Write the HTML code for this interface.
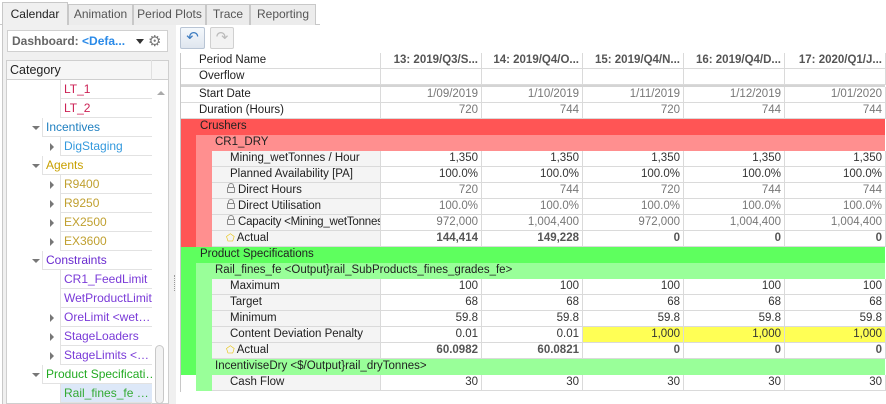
<!DOCTYPE html>
<html><head><meta charset="utf-8"><style>
*{box-sizing:border-box;margin:0;padding:0}
body{width:886px;height:404px;overflow:hidden;background:#fff;font-family:"Liberation Sans",sans-serif;font-size:11.5px;color:#222;position:relative}
.a{position:absolute}
.tab{position:absolute;top:4px;height:21px;border:1px solid #c8c8c8;border-bottom:none;background:#ececec;color:#555;text-align:center;line-height:19px;font-size:12px}
.tr{position:absolute;left:6px;width:146px;height:19px;font-size:12px}
.tr .c{position:absolute;top:0;height:19px;right:0;border:1px solid #e2e2e2;border-right:none;border-top:none;line-height:18px;padding-left:3px;white-space:nowrap;overflow:hidden;background:#fff}
.ar{position:absolute;top:6px;width:0;height:0}
.dn{border-left:4px solid transparent;border-right:4px solid transparent;border-top:4px solid #777;top:8px}
.rt{border-top:4px solid transparent;border-bottom:4px solid transparent;border-left:4px solid #777}
.row{position:absolute;left:181px;width:704px;height:16px;line-height:15px}
.lab{position:absolute;top:0;height:16px;left:31px;width:169px;background:#f4f4f4;border-bottom:1px solid #dadada;border-right:1px solid #dadada;padding-left:18px;white-space:nowrap;overflow:hidden}
.d{position:absolute;top:0;height:16px;width:101px;border-bottom:1px solid #dadada;border-right:1px solid #dadada;text-align:right;padding-right:3px;background:#fff;color:#333}
.g{color:#777}.b{font-weight:bold;color:#555}.y{background:#ffff55}
.lock{display:inline-block;width:8px;height:6px;border:1px solid #888;border-radius:1px;margin-right:3px;position:relative;top:0}
.lock:before{content:"";position:absolute;left:0px;top:-5px;width:4px;height:4px;border:1px solid #888;border-bottom:none;border-radius:3px 3px 0 0}
.star{color:#e6c000;margin-right:2px;font-size:10px}
</style></head><body>
<div class="a" style="left:0;top:24px;width:320px;height:1px;background:#c8c8c8"></div>
<div class="tab" style="left:68px;width:65px">Animation</div>
<div class="tab" style="left:133px;width:73px">Period Plots</div>
<div class="tab" style="left:206px;width:44px">Trace</div>
<div class="tab" style="left:250px;width:66px">Reporting</div>
<div class="tab" style="left:2px;top:2px;width:66px;height:24px;background:#f0f0f0;color:#222;line-height:23px">Calendar</div>
<div class="a" style="left:2px;top:25px;width:174px;height:379px;background:#f0f0f0;border-left:1px solid #c8c8c8"></div>
<div class="a" style="left:7px;top:30px;width:161px;height:22px;background:#fff;border:1px solid #d0d0d0;line-height:20px;padding-left:4px;font-weight:bold;color:#666;font-size:12px">Dashboard: <span style="color:#2a8ae8">&lt;Defa...</span></div>
<div class="a" style="left:136px;top:39px;border-left:4px solid transparent;border-right:4px solid transparent;border-top:5px solid #333"></div>
<div class="a" style="left:148px;top:32px;font-size:15px;color:#777">⚙</div>
<div class="a" style="left:6px;top:60px;width:163px;height:344px;background:#fff;border:1px solid #cfcfcf"></div>
<div class="a" style="left:6px;top:60px;width:163px;height:20px;background:#f6f6f6;border:1px solid #cfcfcf;line-height:19px;padding-left:3px;font-size:12.5px">Category</div>
<div class="a" style="left:151px;top:60px;width:1px;height:344px;background:#e0e0e0"></div>
<div class="a" style="left:157px;top:91px;border-left:4px solid transparent;border-right:4px solid transparent;border-bottom:4px solid #aaa"></div>
<div class="a" style="left:155px;top:345px;width:9px;height:59px;border:1px solid #c8c8c8;border-radius:5px;background:#f2f2f2"></div>

<div class="tr" style="top:80px"><div class="c" style="left:54px;color:#cc2255">LT_1</div></div>
<div class="tr" style="top:99px"><div class="c" style="left:54px;color:#cc2255">LT_2</div></div>
<div class="tr" style="top:118px"><div class="ar dn" style="left:26px"></div><div class="c" style="left:36px;color:#1e7fc0">Incentives</div></div>
<div class="tr" style="top:137px"><div class="ar rt" style="left:44px"></div><div class="c" style="left:54px;color:#3399dd">DigStaging</div></div>
<div class="tr" style="top:156px"><div class="ar dn" style="left:26px"></div><div class="c" style="left:36px;color:#c8a000">Agents</div></div>
<div class="tr" style="top:175px"><div class="ar rt" style="left:44px"></div><div class="c" style="left:54px;color:#c0a030">R9400</div></div>
<div class="tr" style="top:194px"><div class="ar rt" style="left:44px"></div><div class="c" style="left:54px;color:#c0a030">R9250</div></div>
<div class="tr" style="top:213px"><div class="ar rt" style="left:44px"></div><div class="c" style="left:54px;color:#c0a030">EX2500</div></div>
<div class="tr" style="top:232px"><div class="ar rt" style="left:44px"></div><div class="c" style="left:54px;color:#c0a030">EX3600</div></div>
<div class="tr" style="top:251px"><div class="ar dn" style="left:26px"></div><div class="c" style="left:36px;color:#6a2bd0">Constraints</div></div>
<div class="tr" style="top:270px"><div class="c" style="left:54px;color:#7a3ad8">CR1_FeedLimit</div></div>
<div class="tr" style="top:289px"><div class="c" style="left:54px;color:#7a3ad8">WetProductLimit</div></div>
<div class="tr" style="top:308px"><div class="ar rt" style="left:44px"></div><div class="c" style="left:54px;color:#7a3ad8">OreLimit &lt;wet…</div></div>
<div class="tr" style="top:327px"><div class="ar rt" style="left:44px"></div><div class="c" style="left:54px;color:#7a3ad8">StageLoaders</div></div>
<div class="tr" style="top:346px"><div class="ar rt" style="left:44px"></div><div class="c" style="left:54px;color:#7a3ad8">StageLimits &lt;…</div></div>
<div class="tr" style="top:365px"><div class="ar dn" style="left:26px"></div><div class="c" style="left:36px;color:#22aa22">Product Specificati…</div></div>
<div class="tr" style="top:384px"><div class="c" style="left:54px;color:#33aa33;background:#dde8f8">Rail_fines_fe …</div></div>
<div class="a" style="left:174px;top:275px;width:1px;height:16px;border-left:1px dotted #999"></div>

<div class="a" style="left:180px;top:27px;width:25px;height:22px;border:1px solid #b8c4d4;border-radius:2px;background:linear-gradient(#f4f8fc,#dfe6ef);color:#3d7cc0;text-align:center;font-size:15px;line-height:19px">↶</div>
<div class="a" style="left:210px;top:27px;width:24px;height:22px;border:1px solid #d0d0d0;border-radius:2px;background:#f2f2f2;color:#bbb;text-align:center;font-size:15px;line-height:19px">↷</div>

<div class="a" style="left:180px;top:53px;width:706px;height:339px;border-left:1px solid #c8c8c8;border-top:1px solid #c8c8c8"></div>
<div class="row" style="top:53px;left:181px"><div class="lab" style="left:0;width:200px;background:#fff">Period Name</div>
<div class="d b" style="left:200px">13: 2019/Q3/S...</div><div class="d b" style="left:301px">14: 2019/Q4/O...</div><div class="d b" style="left:402px">15: 2019/Q4/N...</div><div class="d b" style="left:503px">16: 2019/Q4/D...</div><div class="d b" style="left:604px">17: 2020/Q1/J...</div></div>
<div class="row" style="top:69px"><div class="lab" style="left:0;width:200px;background:#fff">Overflow</div>
<div class="d" style="left:200px"></div><div class="d" style="left:301px"></div><div class="d" style="left:402px"></div><div class="d" style="left:503px"></div><div class="d" style="left:604px"></div></div>
<div class="a" style="left:181px;top:85px;width:704px;height:2px;background:#d4d4d4"></div>
<div class="row" style="top:87px"><div class="lab" style="left:0;width:200px;background:#fff">Start Date</div>
<div class="d g" style="left:200px">1/09/2019</div><div class="d g" style="left:301px">1/10/2019</div><div class="d g" style="left:402px">1/11/2019</div><div class="d g" style="left:503px">1/12/2019</div><div class="d g" style="left:604px">1/01/2020</div></div>
<div class="row" style="top:103px"><div class="lab" style="left:0;width:200px;background:#fff">Duration (Hours)</div>
<div class="d g" style="left:200px">720</div><div class="d g" style="left:301px">744</div><div class="d g" style="left:402px">720</div><div class="d g" style="left:503px">744</div><div class="d g" style="left:604px">744</div></div>

<div class="a" style="left:181px;top:119px;width:15px;height:128px;background:#ff5555"></div>
<div class="a" style="left:196px;top:135px;width:16px;height:112px;background:#ff8f8f"></div>
<div class="a" style="left:181px;top:119px;width:704px;height:16px;background:#ff5555;padding-left:19px;line-height:15px">Crushers</div>
<div class="a" style="left:196px;top:135px;width:689px;height:16px;background:#ff8f8f;padding-left:19px;line-height:15px">CR1_DRY</div>

<div class="row" style="top:151px"><div class="lab">Mining_wetTonnes / Hour</div>
<div class="d" style="left:200px">1,350</div><div class="d" style="left:301px">1,350</div><div class="d" style="left:402px">1,350</div><div class="d" style="left:503px">1,350</div><div class="d" style="left:604px">1,350</div></div>
<div class="row" style="top:167px"><div class="lab">Planned Availability [PA]</div>
<div class="d" style="left:200px">100.0%</div><div class="d" style="left:301px">100.0%</div><div class="d" style="left:402px">100.0%</div><div class="d" style="left:503px">100.0%</div><div class="d" style="left:604px">100.0%</div></div>
<div class="row" style="top:183px"><div class="lab" style="padding-left:15px"><span class="lock"></span>Direct Hours</div>
<div class="d g" style="left:200px">720</div><div class="d g" style="left:301px">744</div><div class="d g" style="left:402px">720</div><div class="d g" style="left:503px">744</div><div class="d g" style="left:604px">744</div></div>
<div class="row" style="top:199px"><div class="lab" style="padding-left:15px"><span class="lock"></span>Direct Utilisation</div>
<div class="d g" style="left:200px">100.0%</div><div class="d g" style="left:301px">100.0%</div><div class="d g" style="left:402px">100.0%</div><div class="d g" style="left:503px">100.0%</div><div class="d g" style="left:604px">100.0%</div></div>
<div class="row" style="top:215px"><div class="lab" style="padding-left:15px;letter-spacing:-0.2px"><span class="lock"></span>Capacity &lt;Mining_wetTonnes</div>
<div class="d g" style="left:200px">972,000</div><div class="d g" style="left:301px">1,004,400</div><div class="d g" style="left:402px">972,000</div><div class="d g" style="left:503px">1,004,400</div><div class="d g" style="left:604px">1,004,400</div></div>
<div class="row" style="top:231px"><div class="lab" style="padding-left:14px"><span class="star">⬠</span>Actual</div>
<div class="d b" style="left:200px">144,414</div><div class="d b" style="left:301px">149,228</div><div class="d b" style="left:402px">0</div><div class="d b" style="left:503px">0</div><div class="d b" style="left:604px">0</div></div>

<div class="a" style="left:181px;top:247px;width:15px;height:128px;background:#5eff5e"></div>
<div class="a" style="left:196px;top:263px;width:16px;height:128px;background:#99ff99"></div>
<div class="a" style="left:181px;top:247px;width:704px;height:16px;background:#5eff5e;padding-left:19px;line-height:15px">Product Specifications</div>
<div class="a" style="left:196px;top:263px;width:689px;height:16px;background:#99ff99;padding-left:19px;line-height:15px">Rail_fines_fe &lt;Output}rail_SubProducts_fines_grades_fe&gt;</div>

<div class="row" style="top:279px"><div class="lab">Maximum</div>
<div class="d" style="left:200px">100</div><div class="d" style="left:301px">100</div><div class="d" style="left:402px">100</div><div class="d" style="left:503px">100</div><div class="d" style="left:604px">100</div></div>
<div class="row" style="top:295px"><div class="lab">Target</div>
<div class="d" style="left:200px">68</div><div class="d" style="left:301px">68</div><div class="d" style="left:402px">68</div><div class="d" style="left:503px">68</div><div class="d" style="left:604px">68</div></div>
<div class="row" style="top:311px"><div class="lab">Minimum</div>
<div class="d" style="left:200px">59.8</div><div class="d" style="left:301px">59.8</div><div class="d" style="left:402px">59.8</div><div class="d" style="left:503px">59.8</div><div class="d" style="left:604px">59.8</div></div>
<div class="row" style="top:327px"><div class="lab">Content Deviation Penalty</div>
<div class="d" style="left:200px">0.01</div><div class="d" style="left:301px">0.01</div><div class="d y" style="left:402px">1,000</div><div class="d y" style="left:503px">1,000</div><div class="d y" style="left:604px">1,000</div></div>
<div class="row" style="top:343px"><div class="lab" style="padding-left:14px"><span class="star">⬠</span>Actual</div>
<div class="d b" style="left:200px">60.0982</div><div class="d b" style="left:301px">60.0821</div><div class="d b" style="left:402px">0</div><div class="d b" style="left:503px">0</div><div class="d b" style="left:604px">0</div></div>
<div class="a" style="left:196px;top:359px;width:689px;height:16px;background:#99ff99;padding-left:19px;line-height:15px">IncentiviseDry &lt;$/Output}rail_dryTonnes&gt;</div>
<div class="row" style="top:375px"><div class="lab">Cash Flow</div>
<div class="d" style="left:200px">30</div><div class="d" style="left:301px">30</div><div class="d" style="left:402px">30</div><div class="d" style="left:503px">30</div><div class="d" style="left:604px">30</div></div>
</body></html>
